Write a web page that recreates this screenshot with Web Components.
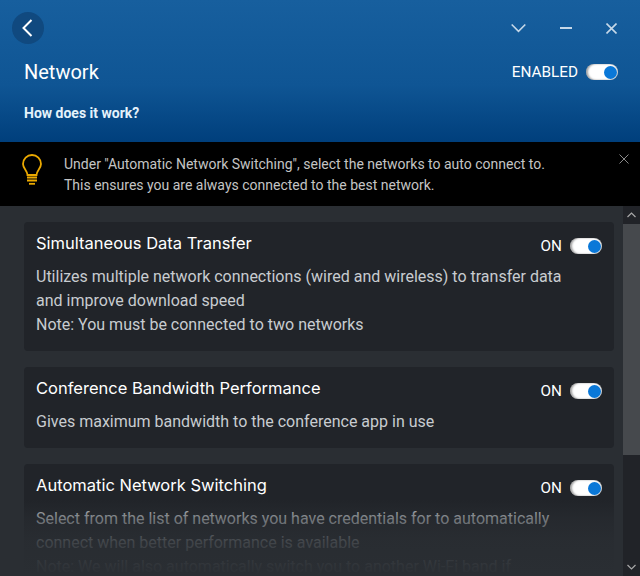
<!DOCTYPE html>
<html>
<head>
<meta charset="utf-8">
<title>Network</title>
<style>
  html, body { margin: 0; height: 100%; background: #2a2e33; }
  body { font-family: Roboto, "Liberation Sans", sans-serif; overflow: hidden; }
  app-window { height: 576px; }
</style>
</head>
<body>
<app-window>
  <net-header slot="header"></net-header>
  <tip-banner slot="banner">Under "Automatic Network Switching", select the networks to auto connect to.<br>This ensures you are always connected to the best network.</tip-banner>
  <setting-card title-text="Simultaneous Data Transfer">Utilizes multiple network connections (wired and wireless) to transfer data and improve download speed<br>Note: You must be connected to two networks</setting-card>
  <setting-card title-text="Conference Bandwidth Performance">Gives maximum bandwidth to the conference app in use</setting-card>
  <setting-card title-text="Automatic Network Switching">Select from the list of networks you have credentials for to automatically connect when better performance is available<br>Note: We will also automatically switch you to another Wi-Fi band if</setting-card>
</app-window>

<script>
class ToggleSwitch extends HTMLElement {
  constructor() {
    super();
    this.attachShadow({ mode: "open" });
    this.shadowRoot.innerHTML = `
    <style>
      :host { display: inline-flex; align-items: center; gap: 8px; font-size: 15.300px; font-weight: 400; line-height: 16px; color: #fff; }
      .track {
        width: 32px; height: 16px; border-radius: 8px; position: relative;
        background: #fff; box-shadow: inset 2px 0 2px rgba(0,0,0,.35), inset -1px 0 1px rgba(0,0,0,.2);
      }
      .knob {
        position: absolute; right: 1.500px; top: 1.500px; width: 13px; height: 13px;
        border-radius: 50%; background: #0a78d8;
      }
    </style>
    <span><slot></slot></span>
    <span class="track"><span class="knob"></span></span>
    `;
  }
}

class NetHeader extends HTMLElement {
  constructor() {
    super();
    this.attachShadow({ mode: "open" });
    this.shadowRoot.innerHTML = `
    <style>
      :host {
        display: flex; flex-direction: column; height: 142px; box-sizing: border-box;
        padding: 12px 23px 0 12px; color: #fff;
        background: linear-gradient(180deg, #175f9e 0%, #0f5594 60%, #003f7c 100%);
      }
      .top { display: flex; align-items: center; height: 32px; }
      .back {
        width: 32px; height: 32px; border-radius: 50%; background: #10497f;
        display: flex; align-items: center; justify-content: center;
      }
      .controls { margin-left: auto; display: flex; align-items: center; gap: 34px; }
      svg { display: block; }
      .row { display: flex; align-items: center; justify-content: space-between; margin: 16px -1px 0 12px; height: 24px; }
      h1 { margin: 0; font-size: 20px; font-weight: 400; line-height: 24px; }
      .how { margin: 21px 0 0 12px; font-size: 14px; font-weight: 700; line-height: 16px; color: #e4f2fb; }
    </style>
    <div class="top">
      <div class="back">
        <svg width="14" height="20" viewBox="0 0 14 20"><path d="M10.500 2 2.500 10l8 8" fill="none" stroke="#fff" stroke-width="2"/></svg>
      </div>
      <div class="controls">
        <svg width="15" height="10" viewBox="0 0 15 10"><path d="M.7 1.500l6.800 6.800 6.800-6.800" fill="none" stroke="#c6d8e8" stroke-width="1.600"/></svg>
        <svg width="12" height="4" viewBox="0 0 12 4"><path d="M0 2h12" stroke="#c6d8e8" stroke-width="2"/></svg>
        <svg width="11" height="11" viewBox="0 0 11 11"><path d="M.5.5l10 10M10.500.5l-10 10" stroke="#c6d8e8" stroke-width="1.600"/></svg>
      </div>
    </div>
    <div class="row">
      <h1>Network</h1>
      <toggle-switch>ENABLED</toggle-switch>
    </div>
    <div class="how">How does it work?</div>
    `;
  }
}

class TipBanner extends HTMLElement {
  constructor() {
    super();
    this.attachShadow({ mode: "open" });
    this.shadowRoot.innerHTML = `
    <style>
      :host {
        display: flex; position: relative; height: 64px; box-sizing: border-box; background: #000;
        padding: 12px 0 0 22px; color: #c4c4c4; font-size: 14px; line-height: 21px;
      }
      .bulb { width: 20px; height: 31px; margin-right: 22px; flex: none; }
      .close { position: absolute; right: 11px; top: 12px; }
    </style>
    <svg class="bulb" viewBox="0 0 20 31">
      <path d="M5.500 21C5.500 17 1 14.500 1 10A9 9 0 0 1 19 10C19 14.500 14.500 17 14.500 21z" fill="none" stroke="#eba900" stroke-width="1.800"/>
      <path d="M5 23.500h10M5 26.500h10" stroke="#eba900" stroke-width="1.800"/>
      <path d="M7 29.800h6" stroke="#eba900" stroke-width="1.800"/>
    </svg>
    <div><slot></slot></div>
    <svg class="close" width="10" height="10" viewBox="0 0 10 10"><path d="M.5.5l9 9M9.500.5l-9 9" stroke="#8a8a8a"/></svg>
    `;
  }
}

class SettingCard extends HTMLElement {
  constructor() {
    super();
    this.attachShadow({ mode: "open" });
    this.shadowRoot.innerHTML = `
    <style>
      :host {
        display: block; background: #212429; border-radius: 4px;
        padding: 11px 12px 14px 12px; margin-bottom: 16px;
      }
      .head { display: flex; justify-content: space-between; align-items: flex-start; height: 27px; }
      h2 { margin: 0; font-family: Inter, Roboto, sans-serif; font-size: 16.500px; font-weight: 400; line-height: 20px; color: #fff; }
      toggle-switch { margin-top: 5px; }
      .body { margin-top: 5px; padding-right: 40px; font-size: 16px; line-height: 24px; color: #c8ccd0; }
    </style>
    <div class="head"><h2></h2><toggle-switch>ON</toggle-switch></div>
    <div class="body"><slot></slot></div>
    `;
  }
  connectedCallback() {
    this.shadowRoot.querySelector("h2").textContent = this.getAttribute("title-text");
  }
}

class AppWindow extends HTMLElement {
  constructor() {
    super();
    this.attachShadow({ mode: "open" });
    this.shadowRoot.innerHTML = `
    <style>
      :host { display: flex; flex-direction: column; background: #2a2e33; overflow: hidden; }
      .main { flex: 1; min-height: 0; display: flex; position: relative; }
      .scroll { flex: 1; min-width: 0; overflow: hidden; padding: 16px 9px 0 24px; }
      .bar { width: 17px; flex: none; background: #212328; display: flex; flex-direction: column; align-items: center; justify-content: space-between; position: relative; }
      .btn { height: 18px; width: 17px; display: flex; align-items: center; justify-content: center; }
      .thumb { position: absolute; left: 0; right: 0; top: 18px; height: 231px; background: #46494d; }
      .fade {
        position: absolute; left: 0; right: 17px; bottom: 0; height: 76px; pointer-events: none;
        background: linear-gradient(180deg, rgba(42,46,51,0) 0%, rgba(42,46,51,.5) 24%, rgba(42,46,51,.85) 55%, rgba(42,46,51,.96) 87%, #2a2e33 100%);
      }
    </style>
    <slot name="header"></slot>
    <slot name="banner"></slot>
    <div class="main">
      <div class="scroll"><slot></slot></div>
      <div class="fade"></div>
      <div class="bar">
        <div class="btn"><svg width="9" height="6" viewBox="0 0 9 6"><path d="M.5 5l4-4 4 4" fill="none" stroke="#a8a8a8" stroke-width="1.200"/></svg></div>
        <div class="thumb"></div>
        <div class="btn"><svg width="9" height="6" viewBox="0 0 9 6"><path d="M.5 1l4 4 4-4" fill="none" stroke="#a8a8a8" stroke-width="1.200"/></svg></div>
      </div>
    </div>
    `;
  }
}

customElements.define("toggle-switch", ToggleSwitch);
customElements.define("net-header", NetHeader);
customElements.define("tip-banner", TipBanner);
customElements.define("setting-card", SettingCard);
customElements.define("app-window", AppWindow);
</script>
</body>
</html>
